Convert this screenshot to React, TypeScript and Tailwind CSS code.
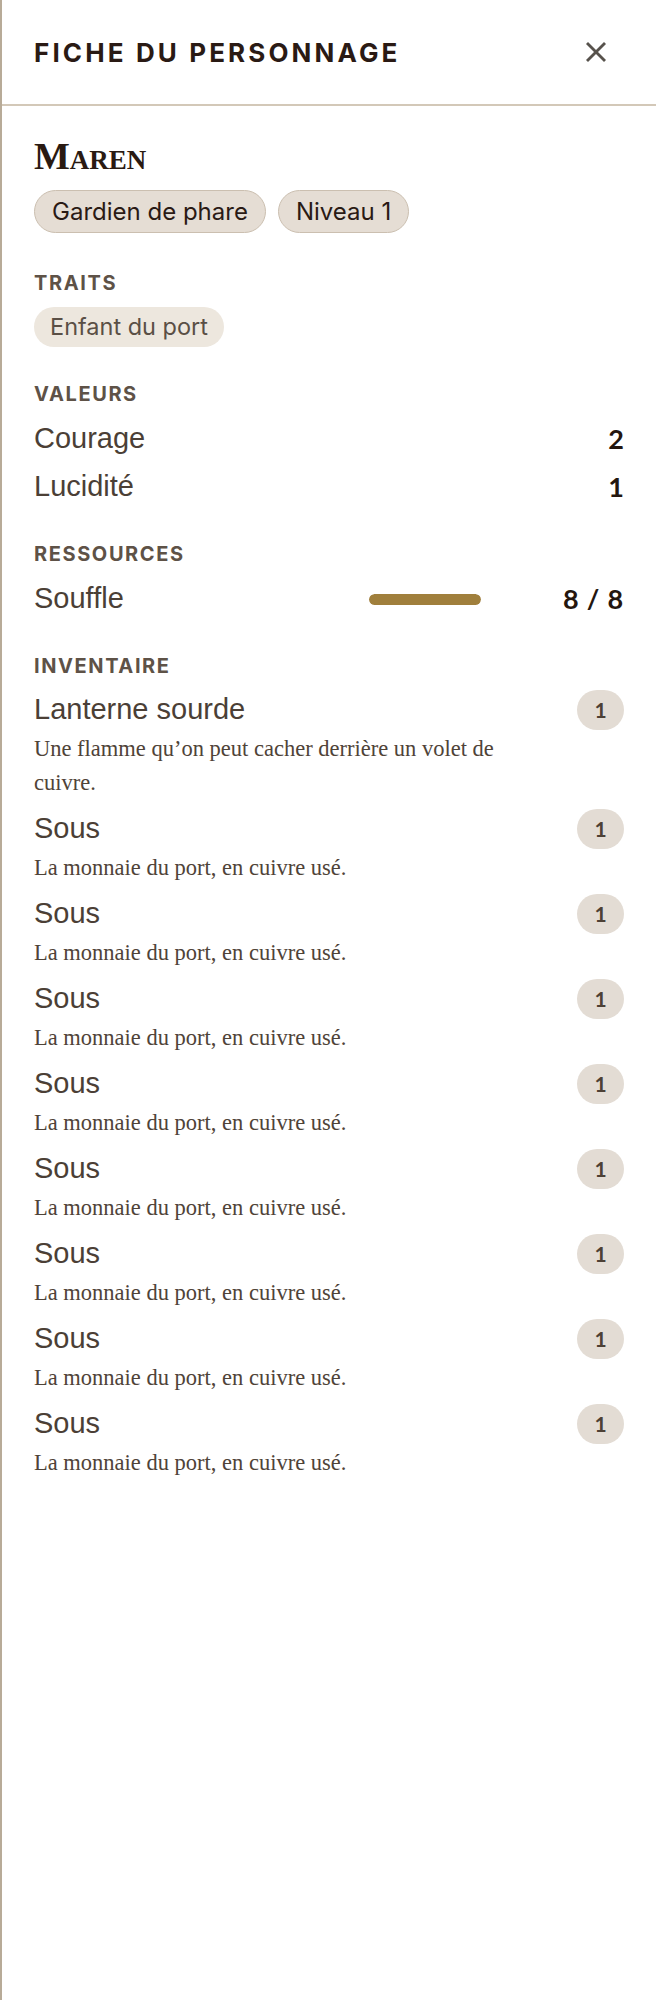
import React from "react";

const SANS = "font-['Inter',sans-serif]";

type Stat = { label: string; value: number };
type Item = { name: string; desc: string; qty: number };

const STATS: Stat[] = [
  { label: "Courage", value: 2 },
  { label: "Lucidité", value: 1 },
];

const SOUS = "La monnaie du port, en cuivre usé.";

const ITEMS: Item[] = [
  { name: "Lanterne sourde", desc: "Une flamme qu’on peut cacher derrière un volet de cuivre.", qty: 1 },
  ...Array.from({ length: 8 }, () => ({ name: "Sous", desc: SOUS, qty: 1 })),
];

function SectionLabel({ children }: { children: React.ReactNode }) {
  return (
    <h3 className={`${SANS} text-[20px] leading-6 font-bold tracking-[0.08em] text-[#5e5247] uppercase`}>
      {children}
    </h3>
  );
}

function CloseIcon() {
  return (
    <svg width="20" height="20" viewBox="0 0 20 20" fill="none" stroke="#57524c" strokeWidth="2.8">
      <line x1="1" y1="1" x2="19" y2="19" />
      <line x1="19" y1="1" x2="1" y2="19" />
    </svg>
  );
}

export default function App() {
  return (
    <div className="min-h-screen bg-white border-l-2 border-[#b8ab98]">
      {/* Header */}
      <header className="h-[106px] flex items-center justify-between pl-8 pr-10 border-b-2 border-[#d3c8b8]">
        <h2 className={`${SANS} text-[26px] font-bold tracking-[0.12em] text-[#2a1a14]`}>
          FICHE DU PERSONNAGE
        </h2>
        <button className="w-10 h-10 flex items-center justify-center">
          <CloseIcon />
        </button>
      </header>

      <div className="px-8 pt-[30px] flex flex-col gap-[35px]">
        {/* Identity */}
        <div className="flex flex-col gap-[14px]">
          <h1 className="font-['Liberation_Serif',serif] font-bold text-[38px] leading-10 text-[#2a1a12] [font-variant-caps:small-caps]">
            Maren
          </h1>
          <div className="flex gap-3">
            <span className={`${SANS} h-[43px] px-[17px] flex items-center rounded-full border border-[#cbbfb0] bg-[#e5ddd4] text-[24px] text-[#2a1a14]`}>
              Gardien de phare
            </span>
            <span className={`${SANS} h-[43px] px-[17px] flex items-center rounded-full border border-[#cbbfb0] bg-[#e5ddd4] text-[24px] text-[#2a1a14]`}>
              Niveau 1
            </span>
          </div>
        </div>

        {/* Traits */}
        <div className="flex flex-col gap-3 mt-[3px]">
          <SectionLabel>Traits</SectionLabel>
          <div className="flex">
            <span className={`${SANS} h-10 px-4 flex items-center rounded-full bg-[#ede7de] text-[23.5px] text-[#5a4f45]`}>
              Enfant du port
            </span>
          </div>
        </div>

        {/* Valeurs */}
        <div className="flex flex-col gap-[13px]">
          <SectionLabel>Valeurs</SectionLabel>
          <div className="flex flex-col gap-2">
            {STATS.map((s) => (
              <div key={s.label} className="h-10 flex items-center justify-between">
                <span className="font-['Liberation_Sans',sans-serif] text-[29px] text-[#4b3f36]">{s.label}</span>
                <span className="font-['Lato',sans-serif] font-bold text-[27px] text-[#24160f]">{s.value}</span>
              </div>
            ))}
          </div>
        </div>

        {/* Ressources */}
        <div className="flex flex-col gap-[13px]">
          <SectionLabel>Ressources</SectionLabel>
          <div className="h-10 flex items-center">
            <span className="flex-1 font-['Liberation_Sans',sans-serif] text-[29px] text-[#4b3f36]">Souffle</span>
            <div className="w-[112px] h-[11px] rounded-full bg-[#ede7de] overflow-hidden">
              <div className="h-full rounded-full bg-[#a07f3c]" style={{ width: "100%" }} />
            </div>
            <span className="w-[143px] text-right font-['Lato',sans-serif] font-bold text-[27px] tracking-[0.03em] text-[#24160f]">
              8 / 8
            </span>
          </div>
        </div>

        {/* Inventaire */}
        <div className="flex flex-col gap-3">
          <SectionLabel>Inventaire</SectionLabel>
          <ul className="flex flex-col gap-[9px]">
            {ITEMS.map((it, i) => (
              <li key={i} className="flex flex-col">
                <div className="h-10 flex items-center justify-between">
                  <span className="font-['Liberation_Sans',sans-serif] text-[29px] text-[#4b3f36]">{it.name}</span>
                  <span className="w-[47px] h-10 rounded-full bg-[#e3dcd4] flex items-center justify-center font-['Lato',sans-serif] font-bold text-[21px] text-[#4d4035]">
                    {it.qty}
                  </span>
                </div>
                <p className="mt-0.5 max-w-[500px] font-['Liberation_Serif',serif] text-[22.5px] leading-[34px] text-[#4f4338]">
                  {it.desc}
                </p>
              </li>
            ))}
          </ul>
        </div>
      </div>
    </div>
  );
}
